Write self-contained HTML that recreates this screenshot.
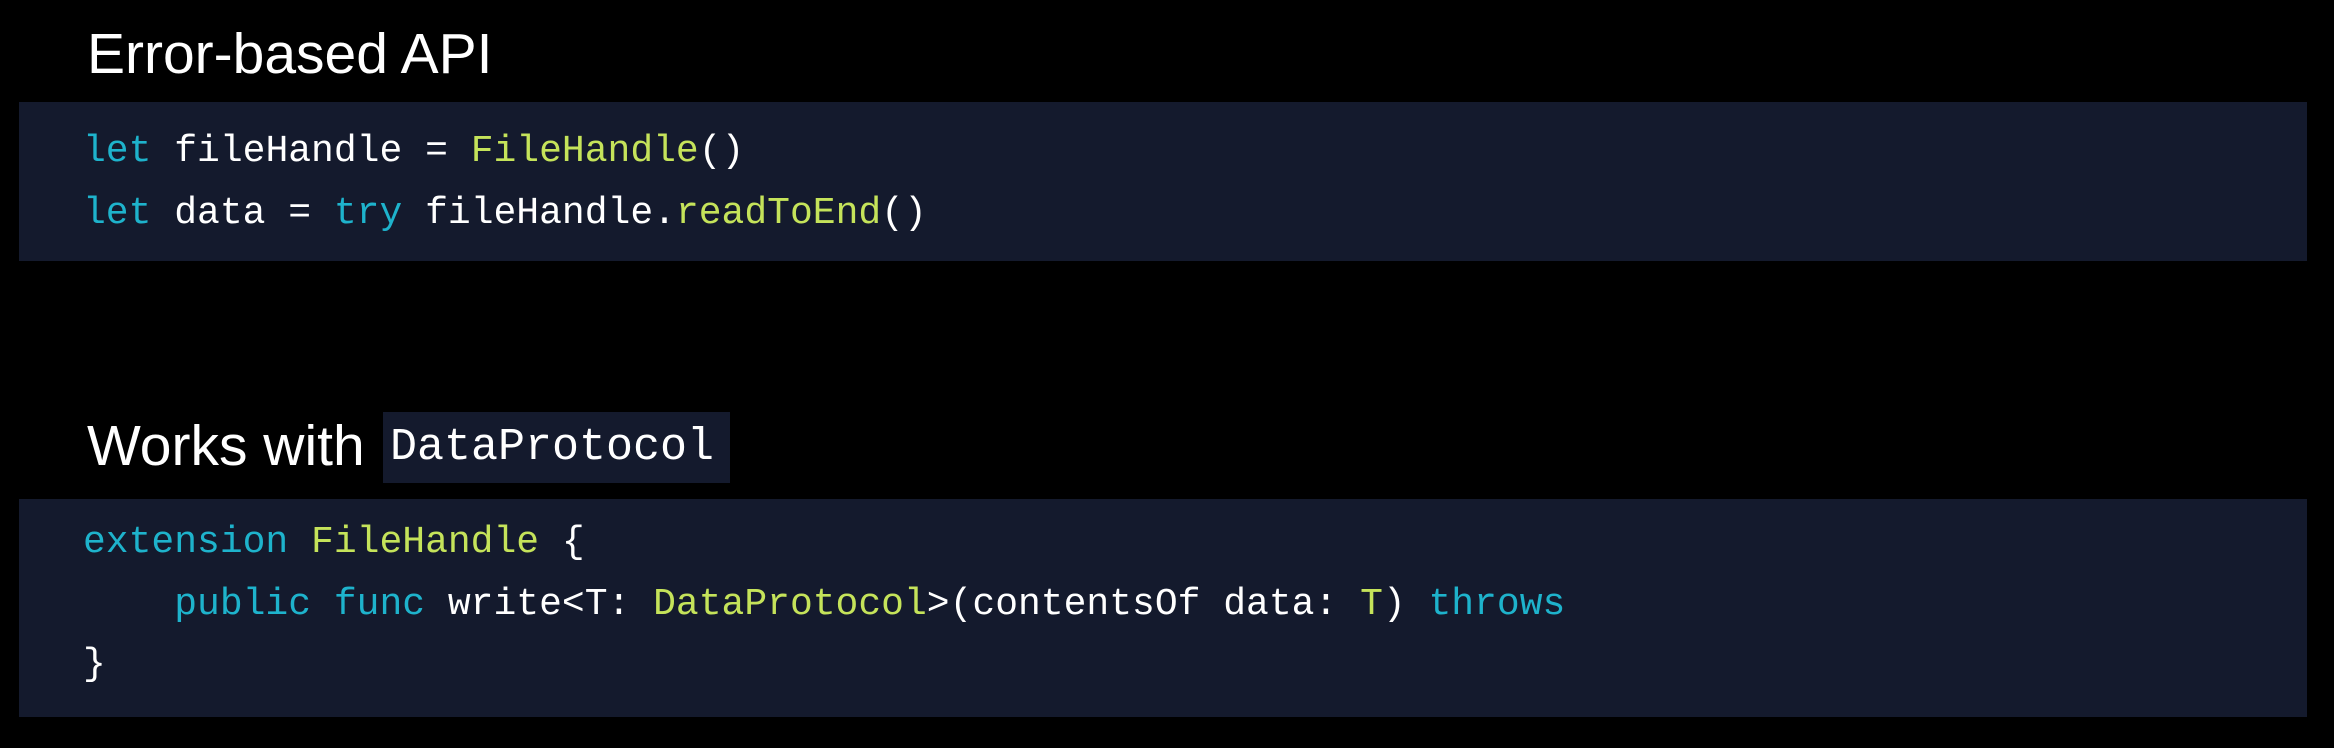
<!DOCTYPE html>
<html><head><meta charset="utf-8"><style>
html,body{margin:0;padding:0;background:#000;width:2334px;height:748px;overflow:hidden;position:relative}
.t{position:absolute;left:87px;color:#fff;font-family:"Liberation Sans",sans-serif;font-size:57px;line-height:1;white-space:nowrap}
.box{position:absolute;left:19px;width:2288px;background:#141a2d}
.c{position:absolute;left:83px;font-family:"Liberation Mono",monospace;font-size:38px;color:#fff;white-space:pre;line-height:1}
.k{color:#1eb3cc}.g{color:#c5e35a}
.chip{position:absolute;left:383px;top:412px;width:347px;height:71px;background:#141a2d;font-family:"Liberation Mono",monospace;font-size:45px;color:#fff;line-height:71px;box-sizing:border-box;padding-left:7px;white-space:nowrap}
</style></head><body>
<div class="t" style="top:26px">Error-based API</div>
<div class="box" style="top:102px;height:159px"></div>
<div class="c" style="top:133px"><span class="k">let</span> fileHandle = <span class="g">FileHandle</span>()</div>
<div class="c" style="top:195px"><span class="k">let</span> data = <span class="k">try</span> fileHandle.<span class="g">readToEnd</span>()</div>
<div class="t" style="top:418px">Works with</div>
<div class="chip">DataProtocol</div>
<div class="box" style="top:499px;height:218px"></div>
<div class="c" style="top:524px"><span class="k">extension</span> <span class="g">FileHandle</span> {</div>
<div class="c" style="top:586px">    <span class="k">public</span> <span class="k">func</span> write&lt;T: <span class="g">DataProtocol</span>&gt;(contentsOf data: <span class="g">T</span>) <span class="k">throws</span></div>
<div class="c" style="top:646px">}</div>
</body></html>
